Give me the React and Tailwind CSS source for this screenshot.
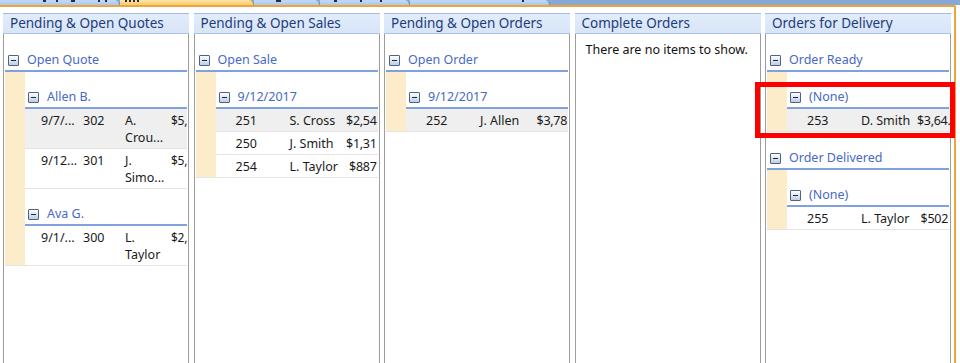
import React from "react";

const panels = [
  {
    title: "Pending & Open Quotes",
    cols: "quote",
    groups: [
      {
        label: "Open Quote",
        subs: [
          {
            label: "Allen B.",
            rows: [
              { cells: ["9/7/...", "302", ["A.", "Crou..."], "$5,"], gray: true },
              { cells: ["9/12...", "301", ["J.", "Simo..."], "$5,"] },
            ],
          },
          {
            label: "Ava G.",
            rows: [{ cells: ["9/1/...", "300", ["L.", "Taylor"], "$2,"] }],
          },
        ],
      },
    ],
  },
  {
    title: "Pending & Open Sales",
    groups: [
      {
        label: "Open Sale",
        subs: [
          {
            label: "9/12/2017",
            rows: [
              { cells: ["251", "S. Cross", "$2,54"], gray: true },
              { cells: ["250", "J. Smith", "$1,31"] },
              { cells: ["254", "L. Taylor", "$887"] },
            ],
          },
        ],
      },
    ],
  },
  {
    title: "Pending & Open Orders",
    groups: [
      {
        label: "Open Order",
        subs: [
          {
            label: "9/12/2017",
            rows: [{ cells: ["252", "J. Allen", "$3,78"], gray: true }],
          },
        ],
      },
    ],
  },
  { title: "Complete Orders", empty: true },
  {
    title: "Orders for Delivery",
    groups: [
      {
        label: "Order Ready",
        subs: [
          {
            label: "(None)",
            rows: [{ cells: ["253", "D. Smith", "$3,64."], gray: true }],
          },
        ],
      },
      {
        label: "Order Delivered",
        subs: [
          {
            label: "(None)",
            rows: [{ cells: ["255", "L. Taylor", "$502"] }],
          },
        ],
      },
    ],
  },
];

function Minus() {
  return (
    <span className="w-[11px] h-[11px] border border-[#50637f] rounded-[1px] bg-linear-to-b from-white to-[#bccde6] flex items-center justify-center shrink-0">
      <span className="w-[5px] h-[1px] bg-[#1c2840]" />
    </span>
  );
}

function GroupHeader({ label, outer }) {
  return (
    <div
      className={`${outer ? "h-[38px]" : "h-[37px]"} flex items-end border-b-2 border-[#7fa2dd] pl-[3px]`}
    >
      <div className="h-[20px] flex items-center gap-[8px] whitespace-nowrap">
        <Minus />
        <span className="text-[12.5px] text-[#4769c6]">{label}</span>
      </div>
    </div>
  );
}

function Row({ row, quote, last }) {
  const base = `flex text-[12.5px] leading-[17px] pt-[3px] pb-[2px] text-[#1a1a1a] whitespace-nowrap ${
    last ? "" : "border-b border-[#e4e4e4]"
  } ${row.gray ? "bg-[#efefef]" : "bg-white"}`;

  if (quote) {
    const [date, id, name, amt] = row.cells;
    return (
      <div className={base}>
        <div className="w-[16px] shrink-0" />
        <div className="w-[42px] shrink-0">{date}</div>
        <div className="w-[42px] shrink-0">{id}</div>
        <div className="w-[46px] shrink-0">
          {name[0]}
          <br />
          {name[1]}
        </div>
        <div className="text-[12px] tracking-[-0.3px]">{amt}</div>
      </div>
    );
  }

  const [id, name, amt] = row.cells;
  return (
    <div className={base}>
      <div className="w-[20px] shrink-0" />
      <div className="w-[54px] shrink-0">{id}</div>
      <div className="w-[56px] shrink-0">{name}</div>
      <div className="w-[31px] shrink-0 text-right tracking-[-0.3px]">{amt}</div>
    </div>
  );
}

function Panel({ panel }) {
  return (
    <div className="w-[186px] shrink-0 flex flex-col">
      <div className="h-[21px] bg-linear-to-b from-[#e2ecfb] to-[#d7e5f8] border-t border-[#a3bde5] border-b border-b-[#a9c2ea] pl-[7px] text-[13.5px] leading-[19px] text-[#1d3b79] whitespace-nowrap overflow-hidden">
        {panel.title}
      </div>
      <div className="flex-1 border-x border-[#9d9d9d] bg-white px-[1px]">
        {panel.empty ? (
          <div className="pt-[7px] pl-[9px] text-[12.5px] leading-[17px] text-[#111]">
            There are no items to show.
          </div>
        ) : (
          panel.groups.map((g) => (
            <div key={g.label}>
              <GroupHeader label={g.label} outer />
              <div className="flex border-b border-[#e4e4e4]">
                <div className="w-[20px] shrink-0 bg-[#fdecca]" />
                <div className="flex-1 min-w-0">
                  {g.subs.map((s, si) => (
                    <div key={si}>
                      <GroupHeader label={s.label} />
                      {s.rows.map((r, ri) => (
                        <Row
                          key={ri}
                          row={r}
                          quote={panel.cols === "quote"}
                          last={si === g.subs.length - 1 && ri === s.rows.length - 1}
                        />
                      ))}
                    </div>
                  ))}
                </div>
              </div>
            </div>
          ))
        )}
      </div>
    </div>
  );
}

// tab strip: only the bottom of the tab captions is visible, drawn as small marks
function Tab({ w, marks = [], active }) {
  return (
    <div
      className={`${w} h-[5px] shrink-0 relative overflow-hidden rounded-tr-[7px] border-r ${
        active
          ? "bg-linear-to-b from-[#fde6a8] to-[#f9c96c] border-[#c08a38]"
          : "bg-linear-to-b from-[#c3d9f5] to-[#aac8f0] border-[#6f8dbf]"
      }`}
    >
      {marks.map(([x, mw], i) => (
        <span
          key={i}
          className="absolute top-0 h-[2px] bg-[#2a2a3a]"
          style={{ left: x, width: mw }}
        />
      ))}
    </div>
  );
}

export default function App() {
  return (
    <div className="w-[960px] h-[363px] bg-white overflow-hidden font-['Noto_Sans',sans-serif] relative">
      <div className="h-[5px] flex bg-[#88a8d6] overflow-hidden">
        <Tab w="w-[120px]" marks={[[43, 3], [56, 2], [71, 4], [98, 2], [105, 2]]} />
        <Tab w="w-[134px]" active marks={[[5, 2], [9, 2], [13, 2], [17, 2]]} />
        <Tab w="w-[66px]" marks={[[22, 5]]} />
        <Tab w="w-[90px]" marks={[[14, 3], [40, 2], [60, 2]]} />
        <Tab w="w-[140px]" marks={[[112, 2]]} />
      </div>
      <div className="w-[956px] h-[358px] border-t-2 border-r-2 border-[#f0a43c] rounded-tr-[2px]">
        <div className="flex gap-[4.5px] pl-[3px] pt-[6px] h-full">
          {panels.map((p) => (
            <Panel key={p.title} panel={p} />
          ))}
        </div>
      </div>
      <div className="absolute left-[755px] top-[82px] w-[200px] h-[56px] border-[5px] border-[#ff0000]" />
    </div>
  );
}
